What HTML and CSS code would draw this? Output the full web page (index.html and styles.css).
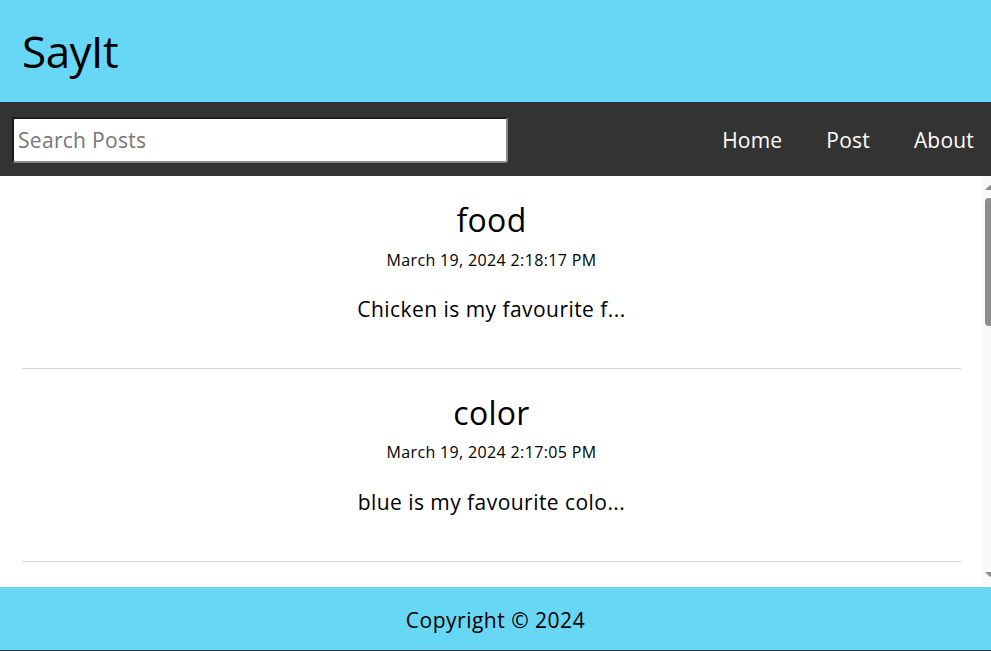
FILE: index.html
```html
<!DOCTYPE html>
<html lang="en">
<head>
<meta charset="utf-8">
<title>SayIt</title>
<link rel="stylesheet" href="styles.css">
</head>
<body>
<header class="site-header">
  <h1 class="logo">SayIt</h1>
</header>
<nav class="navbar">
  <input class="search" type="text" placeholder="Search Posts">
  <ul class="nav-links">
    <li><a href="#">Home</a></li>
    <li><a href="#">Post</a></li>
    <li><a href="#">About</a></li>
  </ul>
</nav>
<div class="main-wrap">
  <main class="posts">
    <article class="post">
      <h2 class="post-title">food</h2>
      <p class="post-date">March 19, 2024 2:18:17 PM</p>
      <p class="post-body">Chicken is my favourite f...</p>
    </article>
    <article class="post">
      <h2 class="post-title">color</h2>
      <p class="post-date">March 19, 2024 2:17:05 PM</p>
      <p class="post-body">blue is my favourite colo...</p>
    </article>
  </main>
  <div class="scrollbar">
    <span class="arrow arrow-up"></span>
    <span class="thumb"></span>
    <span class="arrow arrow-down"></span>
  </div>
</div>
<footer class="site-footer">Copyright © 2024</footer>
</body>
</html>
```

FILE: styles.css
```css
* { box-sizing: border-box; }
html, body { height: 100%; }
body {
  margin: 0;
  font-family: "Open Sans", "Noto Sans", sans-serif;
  background: #333333;
  display: flex;
  flex-direction: column;
  overflow: hidden;
}
.site-header {
  height: 102px;
  background: #68d6f5;
  display: flex;
  align-items: center;
  padding-left: 22px;
  flex: none;
}
.logo {
  margin: 0;
  font-size: 44px;
  font-weight: 400;
  color: #000;
  letter-spacing: -0.5px;
}
.navbar {
  height: 74px;
  background: #333333;
  display: flex;
  align-items: center;
  justify-content: space-between;
  padding: 1px 17px 0 12px;
  flex: none;
}
.search {
  width: 496px;
  height: 46px;
  border: 2px solid;
  border-color: #1a1a1a #8a8a8a #8a8a8a #1a1a1a;
  border-radius: 3px;
  background: #fff;
  font-family: inherit;
  font-size: 21px;
  letter-spacing: 0.3px;
  padding: 0 4px;
  color: #000;
}
.search::placeholder { color: #767676; }
.nav-links {
  list-style: none;
  margin: 0;
  padding: 0;
  display: flex;
  gap: 44px;
}
.nav-links a {
  color: #fff;
  text-decoration: none;
  font-size: 21px;
  letter-spacing: 0.2px;
}
.main-wrap {
  flex: 1;
  position: relative;
  background: #fff;
  overflow: hidden;
}
.posts {
  height: 100%;
  width: 983px;
  padding: 0 22px;
  overflow: hidden;
  text-align: center;
}
.post {
  padding: 22px 0 44px;
  border-bottom: 1px solid #d6d6d6;
}
.post-title {
  margin: 0 0 8px;
  font-size: 32px;
  font-weight: 400;
  line-height: 1.36;
  letter-spacing: 0.3px;
}
.post-date {
  margin: 0 0 25px;
  font-size: 16px;
  line-height: 1.3;
  letter-spacing: 0.35px;
}
.post-body {
  margin: 0;
  font-size: 21px;
  line-height: 1.36;
  letter-spacing: 0.45px;
}
.scrollbar {
  position: absolute;
  top: 0;
  right: 0;
  bottom: 0;
  width: 8px;
  background: #fafafa;
}
.thumb {
  position: absolute;
  left: 2px;
  right: 0;
  top: 22px;
  height: 128px;
  background: #8c8c8c;
  border-radius: 4px 0 0 4px;
}
.arrow {
  position: absolute;
  left: 2px;
  width: 0;
  height: 0;
  border-left: 5px solid transparent;
  border-right: 5px solid transparent;
}
.arrow-up {
  top: 9px;
  border-bottom: 5px solid #8c8c8c;
}
.arrow-down {
  bottom: 10px;
  border-top: 5px solid #8c8c8c;
}
.site-footer {
  height: 64px;
  flex: none;
  background: #68d6f5;
  border-bottom: 1px solid #333;
  display: flex;
  align-items: center;
  justify-content: center;
  padding-top: 3px;
  font-size: 21px;
  letter-spacing: 0.5px;
  color: #000;
}
```
